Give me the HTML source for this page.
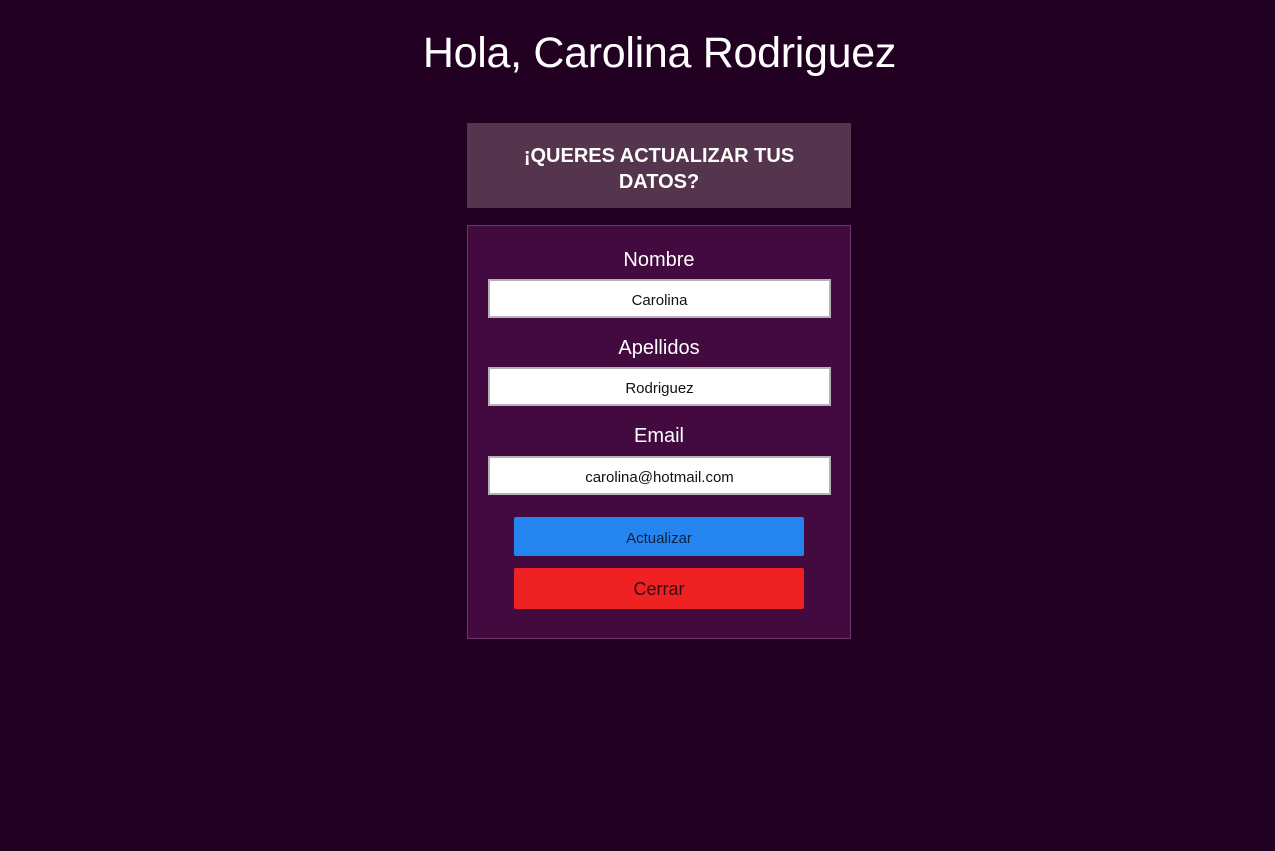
<!DOCTYPE html>
<html><head><meta charset="utf-8"><style>
*{box-sizing:border-box;margin:0;padding:0}
body{width:1275px;height:851px;background:#220022;font-family:"Liberation Sans",sans-serif;position:relative;overflow:hidden}
.abs{position:absolute}
h1{position:absolute;left:0;width:1319px;top:29px;text-align:center;color:#fff;font-weight:normal;font-size:43px;letter-spacing:-0.3px}
.hdr{left:467px;top:123px;width:384px;height:85px;background:#54354d;color:#fff;font-weight:bold;font-size:20px;text-align:center;padding-top:20px;line-height:26px}
.card{left:467px;top:225px;width:384px;height:414px;background:#430a40;border:1px solid #6a3a66}
.lbl{position:absolute;left:0;width:382px;text-align:center;color:#fff;font-size:20px}
.inp{position:absolute;left:20px;width:343px;height:39px;background:#fff;border:2px solid #b8b0b8;text-align:center;font-size:15px;line-height:39px;color:#111}
.btn{position:absolute;left:46px;width:290px;border-radius:2px;text-align:center;color:#222}
</style></head><body>
<h1>Hola, Carolina Rodriguez</h1>
<div class="abs hdr">¡QUERES ACTUALIZAR TUS<br>DATOS?</div>
<div class="abs card">
<div class="lbl" style="top:23px">Nombre</div>
<div class="inp" style="top:53px">Carolina</div>
<div class="lbl" style="top:111px">Apellidos</div>
<div class="inp" style="top:141px">Rodriguez</div>
<div class="lbl" style="top:199px">Email</div>
<div class="inp" style="top:230px">carolina@hotmail.com</div>
<div class="btn" style="top:291px;height:39px;background:#2485f0;font-size:15px;line-height:44px;color:#0f2040">Actualizar</div>
<div class="btn" style="top:342px;height:41px;background:#ee2222;font-size:18px;line-height:42px;color:#3a0a10">Cerrar</div>
</div>
</body></html>
